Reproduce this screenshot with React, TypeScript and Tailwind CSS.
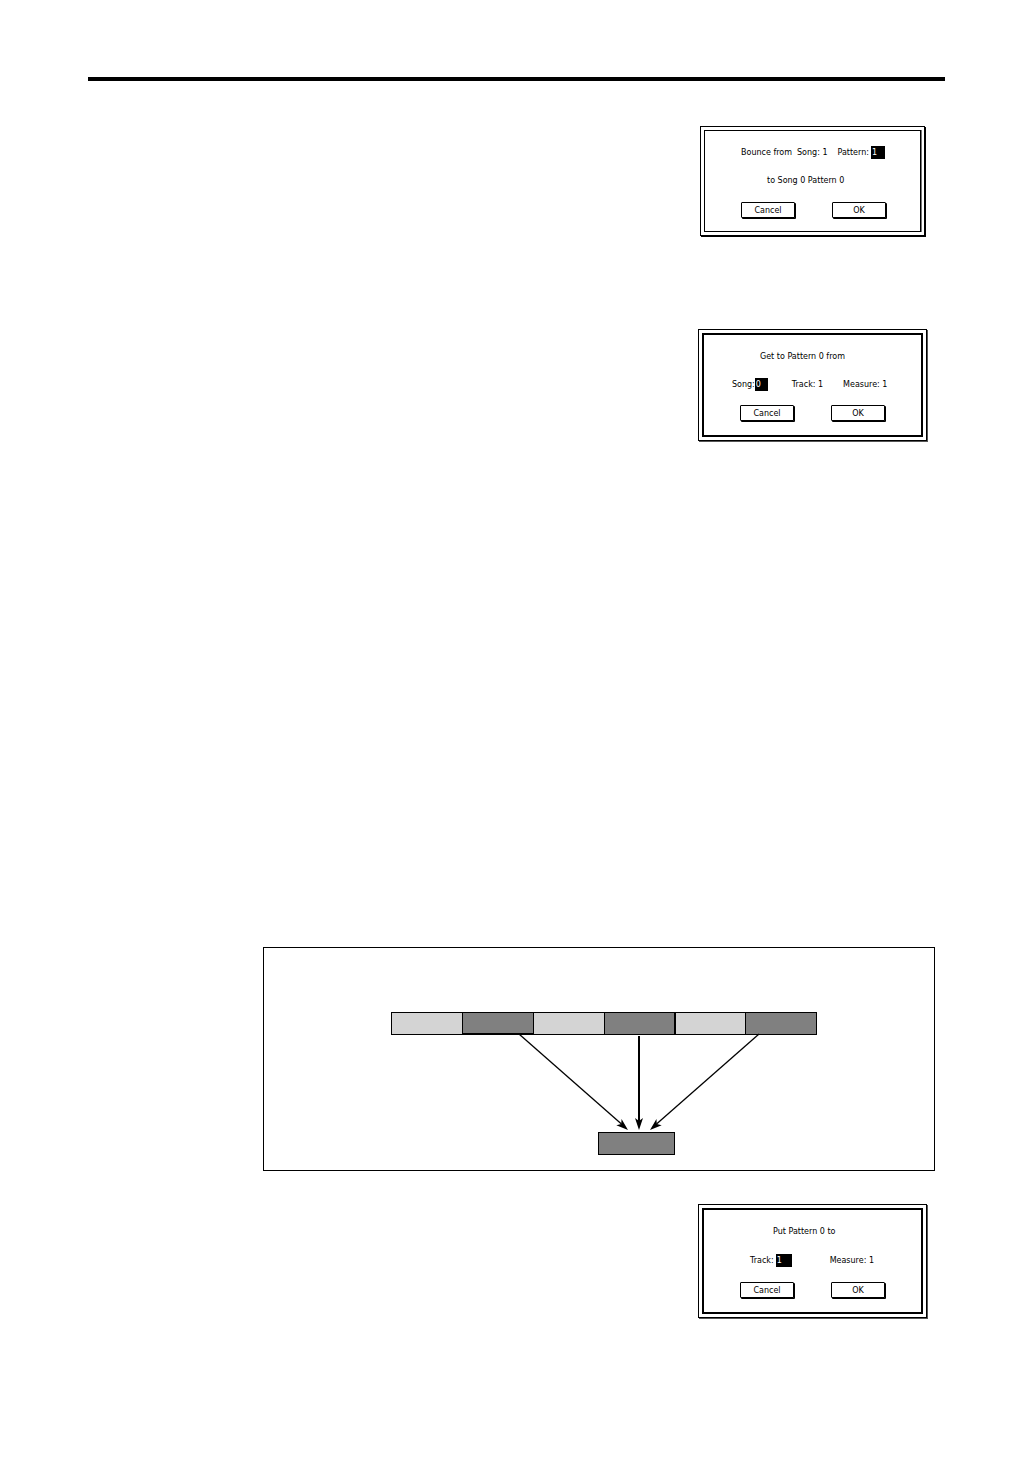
import React, { useState } from 'react';

const Dialog = ({ label, thick = false, className = '', children }: any) => (
  <section
    role="dialog"
    aria-label={label}
    className={`border border-black bg-white p-[3px] ${thick ? 'w-[229px] mr-[109px] shadow-[1px_1px_0_#555]' : 'w-[225px] mr-[111px] shadow-[1px_1px_0_#000]'} ${className}`}
  >
    <div
      className={`flex flex-col border-black pt-[15px] ${thick ? 'border-2 pb-[14px]' : 'border pb-[13px] shadow-[1px_0_0_#777]'}`}
    >
      {children}
    </div>
  </section>
);

const Buttons = ({ className = '' }: any) => (
  <div className={`flex gap-[37px] pl-9 ${className}`}>
    {['Cancel', 'OK'].map((text) => (
      <button
        key={text}
        type="button"
        className="h-4 w-[54px] rounded-[1px] border border-black bg-white pt-px leading-[13px] shadow-[1px_1px_0_#000]"
      >
        {text}
      </button>
    ))}
  </div>
);

const Field = ({ id, label, initial, className = '' }: any) => {
  const [value, setValue] = useState(initial);

  return (
    <div className="flex items-start">
      <label htmlFor={id}>{label}</label>
      <input
        id={id}
        value={value}
        onChange={(e) => setValue(e.target.value)}
        className={`h-[13px] rounded-none bg-black pl-px text-white leading-[13px] outline-none ${className}`}
      />
    </div>
  );
};

const bars = [
  { x: 0, fill: '#d4d4d4' },
  { x: 71, fill: '#808080' },
  { x: 142, fill: '#d4d4d4' },
  { x: 213, fill: '#808080' },
  { x: 284, fill: '#d4d4d4' },
  { x: 354, fill: '#808080' },
];

const arrows = [
  { x1: 128, y1: 22, x2: 237, y2: 118, angle: 41, width: 1.3 },
  { x1: 248, y1: 24, x2: 248, y2: 118, angle: 90, width: 2 },
  { x1: 368, y1: 22, x2: 259, y2: 118, angle: 139, width: 1.3 },
];

const Diagram = () => (
  <svg width="427" height="144" viewBox="0 0 427 144" role="img" aria-label="Measures copied to pattern">
    <g stroke="#000" shapeRendering="crispEdges">
      {bars.map((bar) => (
        <rect key={bar.x} x={bar.x + 0.5} y="0.5" width="71" height="22" fill={bar.fill} />
      ))}
      <path d="M71 21.5h71M283.5 0v22" />
      <rect x="207.5" y="120.5" width="76" height="22" fill="#808080" />
    </g>
    {arrows.map((a) => (
      <g key={a.x1}>
        <line x1={a.x1} y1={a.y1} x2={a.x2 - (a.x2 - a.x1) * 0.06} y2={a.y2 - 6} stroke="#000" strokeWidth={a.width} />
        <path d="M0 0L-12 -4L-9 0L-12 4Z" transform={`translate(${a.x2} ${a.y2}) rotate(${a.angle})`} />
      </g>
    ))}
  </svg>
);

const App = () => {
  return (
    <main className="flex min-h-screen flex-col items-end bg-white pt-[77px] font-['DejaVu_Sans',sans-serif] text-[8px] leading-[14px] text-black">
      <hr className="ml-[88px] mr-[91px] h-1 self-stretch border-0 bg-black" />

      <Dialog label="Bounce pattern" className="mt-[45px]">
        <div className="flex h-[14px] items-start pl-9">
          <span className="mr-[5px]">Bounce from</span>
          <span className="mr-[10px]">Song: 1</span>
          <Field id="bounce-pattern" label="Pattern:" initial="1" className="ml-0.5 w-[14px]" />
        </div>
        <p className="mt-[14px] pl-[62px]">to Song 0 Pattern 0</p>
        <Buttons className="mt-[14px]" />
      </Dialog>

      <Dialog label="Get to pattern" thick className="mt-[93px]">
        <p className="pl-14">Get to Pattern 0 from</p>
        <div className="mt-[14px] flex h-[14px] items-start pl-7">
          <Field id="get-song" label="Song:" initial="0" className="w-[13px]" />
          <span className="ml-6 mr-5">Track: 1</span>
          <span>Measure: 1</span>
        </div>
        <Buttons className="mt-[13px]" />
      </Dialog>

      <figure className="ml-[263px] mr-[101px] mt-[506px] h-[224px] self-stretch border border-black pl-[127px] pt-16">
        <Diagram />
      </figure>

      <Dialog label="Put pattern" thick className="mt-[33px]">
        <p className="pl-[69px]">Put Pattern 0 to</p>
        <div className="mt-[15px] flex h-[14px] items-start gap-[38px] pl-[46px]">
          <Field id="put-track" label="Track:" initial="1" className="ml-0.5 w-4" />
          <span>Measure: 1</span>
        </div>
        <Buttons className="mt-[14px]" />
      </Dialog>
    </main>
  );
};

export default App;
